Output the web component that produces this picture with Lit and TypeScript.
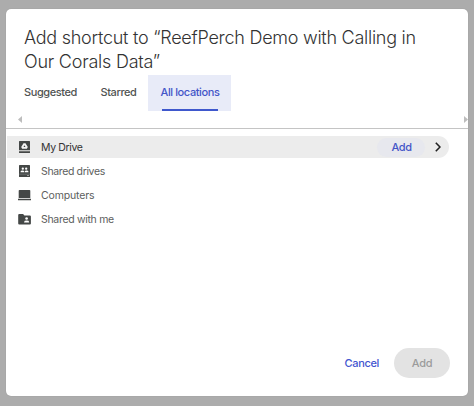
import { LitElement, html, css, svg } from "lit";
import { customElement, state } from "lit/decorators.js";
import { classMap } from "lit/directives/class-map.js";

const icons = {
  drive: svg`<path fill="#444746" d="M1.6 0h9.8q.6 0 .6.6V9.200H1V.6Q1 0 1.600 0zM1 10.200h11v1.200q0 .6-.6.600H1.600q-.6 0-.6-.600z"/><path fill="#f4f4f4" fill-rule="evenodd" d="M5.500 2.200h2l2.300 3.900-.9 1.600H4.100l-.9-1.600zM6.500 4.300 5.500 6.100h2z"/>`,
  shared: svg`<path fill="#444746" d="M1.600 0h9.800q.6 0 .6.600V11.400q0 .6-.6.600H1.600q-.6 0-.6-.600V.6Q1 0 1.600 0z"/><path d="M1 9.200h11" stroke="#8d8f8e" stroke-width=".5"/><g fill="#fff"><circle cx="4.800" cy="3.700" r="1.150"/><circle cx="8.200" cy="3.700" r="1.150"/><path d="M2.600 7.200v-.7q0-1.100 2-1.100 1.500 0 1.600 1.100v.7zM6.800 7.200v-.7q.1-1.100 1.600-1.100 2 0 2 1.100v.7z"/><circle cx="10" cy="10.500" r=".6"/></g>`,
  computer: svg`<path fill="#444746" d="M1.500 1h10q.8 0 .8.800V9H.7V1.800Q.7 1 1.500 1zM0 9.800h13v1.400H0z"/>`,
  people: svg`<path fill="#444746" d="M1.200 1h3.900l1.300 1.400h5.500q1 0 1 1v7q0 1-1 1H1.200q-1 0-1-1V2q0-1 1-1z"/><g fill="#fff"><circle cx="8.600" cy="5.500" r="1.300"/><path d="M6.100 9.500v-.6q0-1.400 2.500-1.400t2.500 1.400v.6z"/></g>`,
};

@customElement("app-root")
export class AppRoot extends LitElement {
  @state() private tab = "All locations";
  @state() private place = "My Drive";

  private tabs = [
    { name: "Suggested", cls: "suggested" },
    { name: "Starred", cls: "starred" },
    { name: "All locations", cls: "all" },
  ];
  private places = [
    { name: "My Drive", icon: icons.drive, cls: "p1" },
    { name: "Shared drives", icon: icons.shared, cls: "p2" },
    { name: "Computers", icon: icons.computer, cls: "p3" },
    { name: "Shared with me", icon: icons.people, cls: "p4" },
  ];

  static styles = css`
    :host { display: block; box-sizing: border-box; height: 406px; padding: 9px 6px 10px; background: #acacac; font-family: Inter, "Open Sans", sans-serif; font-size: 11px; color: #444746; }
    * { box-sizing: border-box; }
    button { font: inherit; letter-spacing: inherit; border: 0; padding: 0; background: none; white-space: nowrap; }
    .dialog { width: 462px; height: 387px; display: flex; flex-direction: column; background: #fff; border-radius: 5px; box-shadow: 0 0 1px #888; }
    h1 { margin: 0; padding: 17px 0 0 18px; height: 66px; font-size: 18px; line-height: 24px; font-weight: 300; color: #333; white-space: nowrap; }
    h1 span { display: block; }
    .l1 { letter-spacing: -0.26px; }
    .l2 { letter-spacing: -0.23px; }
    .tabs { display: flex; height: 36px; padding-left: 6px; letter-spacing: -0.4px; }
    .tab { display: flex; flex-direction: column; align-items: center; justify-content: space-between; padding-top: 10px; line-height: 15px; font-weight: 500; color: #505352; }
    .suggested { width: 76px; }
    .starred { width: 60px; padding-left: 1px; }
    .all { width: 83px; padding-left: 1px; }
    .suggested span { margin-right: -12px; margin-left: -12px; }
    .suggested { padding-left: 1px; }
    .tab.active { background: #e8ebf8; color: #4355c8; }
    .line { width: 56px; height: 2px; background: #3f58cd; }
    .scroll { display: flex; justify-content: space-between; height: 18px; padding: 5px 0 0 12px; border-bottom: 1px solid #c4c4c4; }
    .scroll svg { width: 4px; height: 7px; }
    .list { padding: 7px 19px 0 1px; flex: 1; }
    .row { display: flex; align-items: center; height: 24px; padding-left: 11px; color: #5c5e5d; font-size: 10.5px; }
    .row .icon { width: 13px; height: 12px; margin-right: 10px; }
    .row.active { height: 22px; margin: 0 0 1px; border-radius: 0 11px 11px 0; background: #ececec; color: #333; }
    .p1, .p2 { letter-spacing: -0.36px; }
    .p3 { letter-spacing: -0.16px; }
    .p4 { letter-spacing: -0.31px; }
    .add { margin-left: auto; width: 48px; height: 19px; border-radius: 10px; background: #e7e8ee; color: #4355c8; font-weight: 500; font-size: 11px; padding-left: 1px; }
    .chev { width: 6px; height: 10px; margin: 0 8px 0 10px; }
    .foot { display: flex; justify-content: flex-end; align-items: center; gap: 15px; height: 30px; margin: 0 18px 18px 0; letter-spacing: -0.35px; }
    .cancel { color: #4355d0; font-weight: 500; }
    .submit { width: 56px; height: 30px; border-radius: 15px; background: #e3e3e3; color: #9b9b9b; font-weight: 500; }
  `;

  render() {
    return html`<section class="dialog">
      <h1><span class="l1">Add shortcut to “ReefPerch Demo with Calling in</span><span class="l2">Our Corals Data”</span></h1>
      <nav class="tabs">
        ${this.tabs.map((t) => {
          const active = t.name === this.tab;
          return html`<button class=${classMap({ tab: true, active, [t.cls]: true })} @click=${() => (this.tab = t.name)}>
            <span>${t.name}</span>${active ? html`<i class="line"></i>` : ""}</button>`;
        })}
      </nav>
      <div class="scroll">
        <svg viewBox="0 0 4 7"><path d="M4 0v7L0 3.500z" fill="#bdbdbd"/></svg>
        <svg viewBox="0 0 4 7"><path d="M0 0v7l4-3.500z" fill="#bdbdbd"/></svg>
      </div>
      <div class="list">
        ${this.places.map((p) => {
          const active = p.name === this.place;
          return html`<div class=${classMap({ row: true, active, [p.cls]: true })} @click=${() => (this.place = p.name)}>
            <svg class="icon" viewBox="0 0 13 12">${p.icon}</svg><span>${p.name}</span>
            ${active ? html`<button class="add">Add</button><svg class="chev" viewBox="0 0 6 10"><path d="M.8.7 5 5 .8 9.300" fill="none" stroke="#222" stroke-width="1.600"/></svg>` : ""}
          </div>`;
        })}
      </div>
      <footer class="foot"><button class="cancel">Cancel</button><button class="submit">Add</button></footer>
    </section>`;
  }
}
